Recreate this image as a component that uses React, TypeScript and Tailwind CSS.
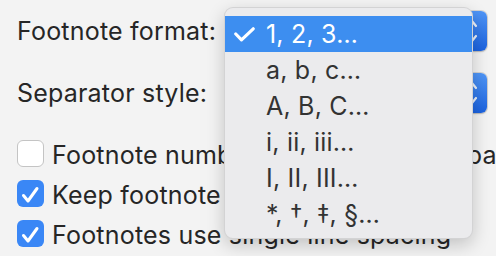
import { useState } from 'react'

const FONT = { fontFamily: 'Inter, "Liberation Sans", sans-serif' }

const formats = ['1, 2, 3…', 'a, b, c…', 'A, B, C…', 'i, ii, iii…', 'I, II, III…', '*, †, ‡, §…']

function PopupButton({ value }: { value: string }) {
    return (
        <div className="flex-1 h-[40px] ml-[20px] flex items-stretch rounded-[6px] bg-white shadow-[0_0_0_1px_rgba(0,0,0,0.12),0_1px_2px_rgba(0,0,0,0.15)] overflow-hidden">
            <div className="flex-1 flex items-center pl-[12px] text-[#262626]">{value}</div>
            <div className="w-[30px] flex items-center justify-center bg-gradient-to-b from-[#4f95f6] to-[#1b62df]">
                <svg width="12" height="26" viewBox="0 0 12 26" fill="none" stroke="#ffffff" strokeWidth="2.2" strokeLinecap="round" strokeLinejoin="round" className="opacity-90">
                    <path d="M2 8 L6 3 L10 8" />
                    <path d="M2 18 L6 23 L10 18" />
                </svg>
            </div>
        </div>
    )
}

function Checkbox({ checked }: { checked: boolean }) {
    if (!checked)
        return <div className="w-[27px] h-[27px] shrink-0 rounded-[6px] bg-white border border-[#c4c4c4]" />
    return (
        <div className="w-[27px] h-[27px] shrink-0 rounded-[6px] bg-[#3a87f6] flex items-center justify-center">
            <svg width="27" height="27" viewBox="0 0 27 27" fill="none" stroke="#ffffff" strokeWidth="3" strokeLinecap="round" strokeLinejoin="round">
                <path d="M6.5 15.5 L11 21 L20 8.5" />
            </svg>
        </div>
    )
}

export default function App() {
    const [selected] = useState(0)
    const options = [
        { label: 'Footnote numbers restart on each page', checked: false },
        { label: 'Keep footnote with its reference', checked: true },
        { label: 'Footnotes use single line spacing', checked: true },
    ]

    return (
        <div style={FONT} className="relative w-[496px] h-[256px] overflow-hidden bg-[#f3f3f3] text-[25px] tracking-[0.2px] text-[#262626]">
            <div className="flex flex-col pt-[11px] pl-[17px] pr-[9px]">
                <div className="h-[40px] flex items-center">
                    <span className="leading-[40px] whitespace-nowrap">Footnote format:</span>
                    <PopupButton value="1, 2, 3…" />
                </div>
                <div className="h-[40px] mt-[22px] flex items-center">
                    <span className="leading-[40px] whitespace-nowrap">Separator style:</span>
                    <PopupButton value="Line" />
                </div>
                <div className="mt-[20px] flex flex-col">
                    {options.map(o => (
                        <div key={o.label} className="h-[40px] flex items-center gap-[8px]">
                            <Checkbox checked={o.checked} />
                            <span className="leading-[40px] mt-[3px] whitespace-nowrap">{o.label}</span>
                        </div>
                    ))}
                </div>
            </div>

            <div className="absolute left-[224px] top-[7px] w-[249px] h-[232px] rounded-[9px] bg-[#ebebed] border border-black/10 shadow-[0_6px_18px_rgba(0,0,0,0.2)] pt-[8px] overflow-hidden">
                {formats.map((f, i) => (
                    <div key={f} className={`h-[36px] flex items-center ${i === selected ? 'bg-[#3d8ef0] text-white' : 'text-[#333333]'}`}>
                        <div className="w-[41px] shrink-0 pl-[9px] flex items-center">
                            {i === selected && (
                                <svg width="21" height="15" viewBox="0 0 21 15" fill="none" stroke="#ffffff" strokeWidth="3.2" strokeLinecap="round" strokeLinejoin="round">
                                    <path d="M1.8 7 L7.5 12.8 L19.2 1.8" />
                                </svg>
                            )}
                        </div>
                        <span className="leading-[36px] whitespace-nowrap">{f}</span>
                    </div>
                ))}
            </div>
        </div>
    )
}
